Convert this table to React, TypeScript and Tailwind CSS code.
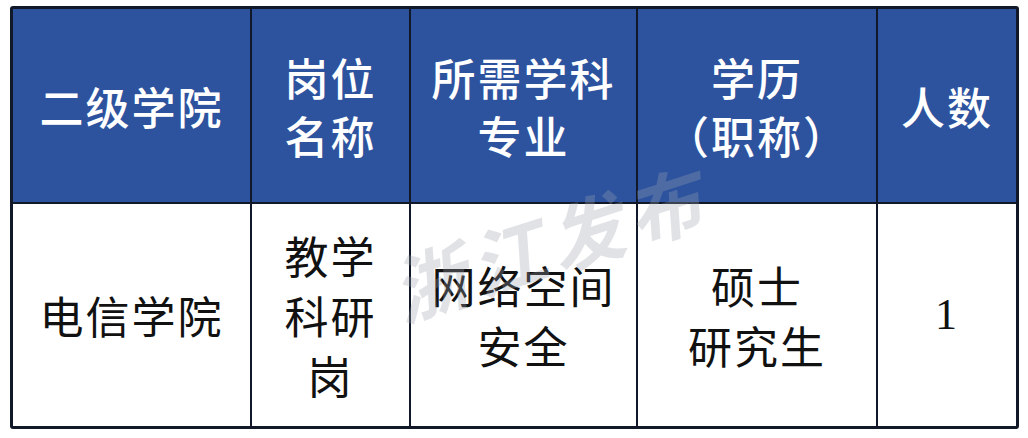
const headers = [
  ["二级学院"],
  ["岗位", "名称"],
  ["所需学科", "专业"],
  ["学历", "（职称）"],
  ["人数"],
]

const row = [
  ["电信学院"],
  ["教学", "科研", "岗"],
  ["网络空间", "安全"],
  ["硕士", "研究生"],
  ["1"],
]

const cols = "grid-cols-[237px_157px_225px_238px_138px]"

export default function App() {
  return (
    <div className="h-[438px] w-[1028px] bg-white pl-[10px] pt-[6px]">
      <div className="relative w-[1009px] overflow-hidden rounded-[3px] border-[3px] border-[#111827] bg-[#111827] font-['Noto_Sans_CJK_SC',sans-serif]">
        <div className={`grid ${cols} gap-x-[2px]`}>
          {headers.map((lines, i) => (
            <div
              key={i}
              className="flex h-[193px] flex-col items-center justify-center bg-[#2d539f] text-[44px] font-medium leading-[58px] tracking-[2px] text-white"
            >
              {lines.map((l) => (
                <span key={l}>{l}</span>
              ))}
            </div>
          ))}
        </div>
        <div className={`mt-[2px] grid ${cols} gap-x-[2px]`}>
          {row.map((lines, i) => (
            <div
              key={i}
              className={`flex h-[222px] flex-col items-center justify-center bg-white text-[44px] leading-[60px] tracking-[2px] text-[#111] ${
                i === 4 ? "font-['Liberation_Serif',serif]" : ""
              }`}
            >
              {lines.map((l) => (
                <span key={l}>{l}</span>
              ))}
            </div>
          ))}
        </div>
        <div className="pointer-events-none absolute left-[372px] top-[176px] -rotate-[18deg] text-[74px] font-bold italic tracking-[8px] text-[#9ca3af] opacity-30">
          浙江发布
        </div>
      </div>
    </div>
  )
}
